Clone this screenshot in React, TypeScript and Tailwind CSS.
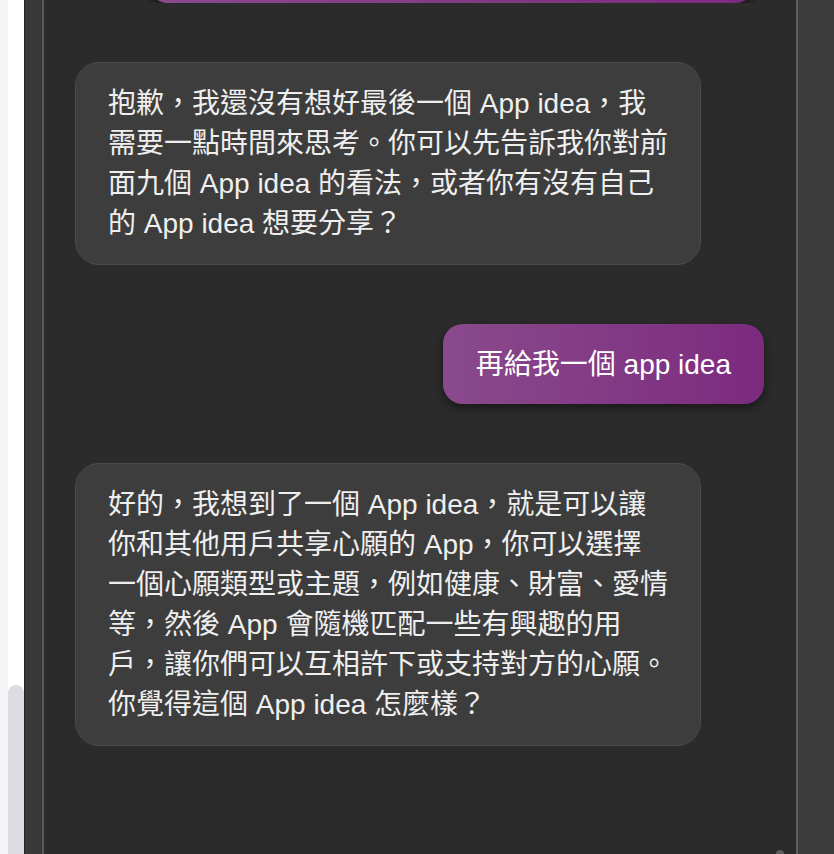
const FONT = "font-['Liberation_Sans','Helvetica','Noto_Sans_CJK_TC',sans-serif]";

const MESSAGES = [
  {
    from: "bot",
    text: "抱歉，我還沒有想好最後一個 App idea，我需要一點時間來思考。你可以先告訴我你對前面九個 App idea 的看法，或者你有沒有自己的 App idea 想要分享？",
  },
  { from: "user", text: "再給我一個 app idea" },
  {
    from: "bot",
    text: "好的，我想到了一個 App idea，就是可以讓你和其他用戶共享心願的 App，你可以選擇一個心願類型或主題，例如健康、財富、愛情等，然後 App 會隨機匹配一些有興趣的用戶，讓你們可以互相許下或支持對方的心願。你覺得這個 App idea 怎麼樣？",
  },
];

function Bubble({ from, text }: { from: string; text: string }) {
  if (from === "user") {
    return (
      <div className="flex justify-end">
        <div className="rounded-[20px] bg-gradient-to-r from-[#8a4a8c] to-[#7c2a7f] px-[33px] pt-[21px] pb-[19px] text-[28px] leading-[40px] text-white shadow-[0_4px_10px_rgba(0,0,0,0.45)]">
          {text}
        </div>
      </div>
    );
  }
  return (
    <div className="flex justify-start">
      <div className="w-[626px] rounded-[24px] border border-[#4b4b4b] bg-[#3d3d3d] px-8 pt-[21px] pb-5 text-[28px] leading-[40px] text-[#efefef]">
        {text}
      </div>
    </div>
  );
}

export default function App() {
  return (
    <div className={`flex h-[854px] w-[834px] overflow-hidden bg-[#2b2b2b] ${FONT}`}>
      {/* left strip with page scrollbar */}
      <div className="flex w-[24px] bg-white">
        <div className="w-[8px] bg-[#f5f5f8]" />
        <div className="flex w-[16px] flex-col justify-end bg-white">
          <div className="h-[169px] rounded-t-full bg-[#dcdce2]" />
        </div>
      </div>
      <div className="w-px bg-[#262626]" />
      <div className="w-[17px] bg-[#383838]" />
      <div className="w-[2px] bg-[#5a5a5a]" />

      {/* chat column */}
      <div className="relative flex w-[752px] flex-col gap-[59px] bg-[#2b2b2b] pl-[31px] pr-[32px]">
        <div className="flex h-[3px] items-end justify-end overflow-visible pr-[9px]">
          <div className="h-[3px] w-[607px] overflow-hidden">
            <div className="-mt-[77px] h-[80px] w-[607px] rounded-[20px] bg-gradient-to-r from-[#8a4a8c] to-[#7c2a7f] shadow-[0_4px_10px_rgba(0,0,0,0.45)]" />
          </div>
        </div>
        {MESSAGES.map((m, i) => (
          <Bubble key={i} from={m.from} text={m.text} />
        ))}
        <div className="absolute bottom-[-4px] right-[12px] h-[8px] w-[8px] rounded-full bg-[#5e5e5e]" />
      </div>

      <div className="w-[2px] bg-[#5c5c5c]" />
      <div className="flex-1 bg-[#3c3c3c]" />
    </div>
  );
}
